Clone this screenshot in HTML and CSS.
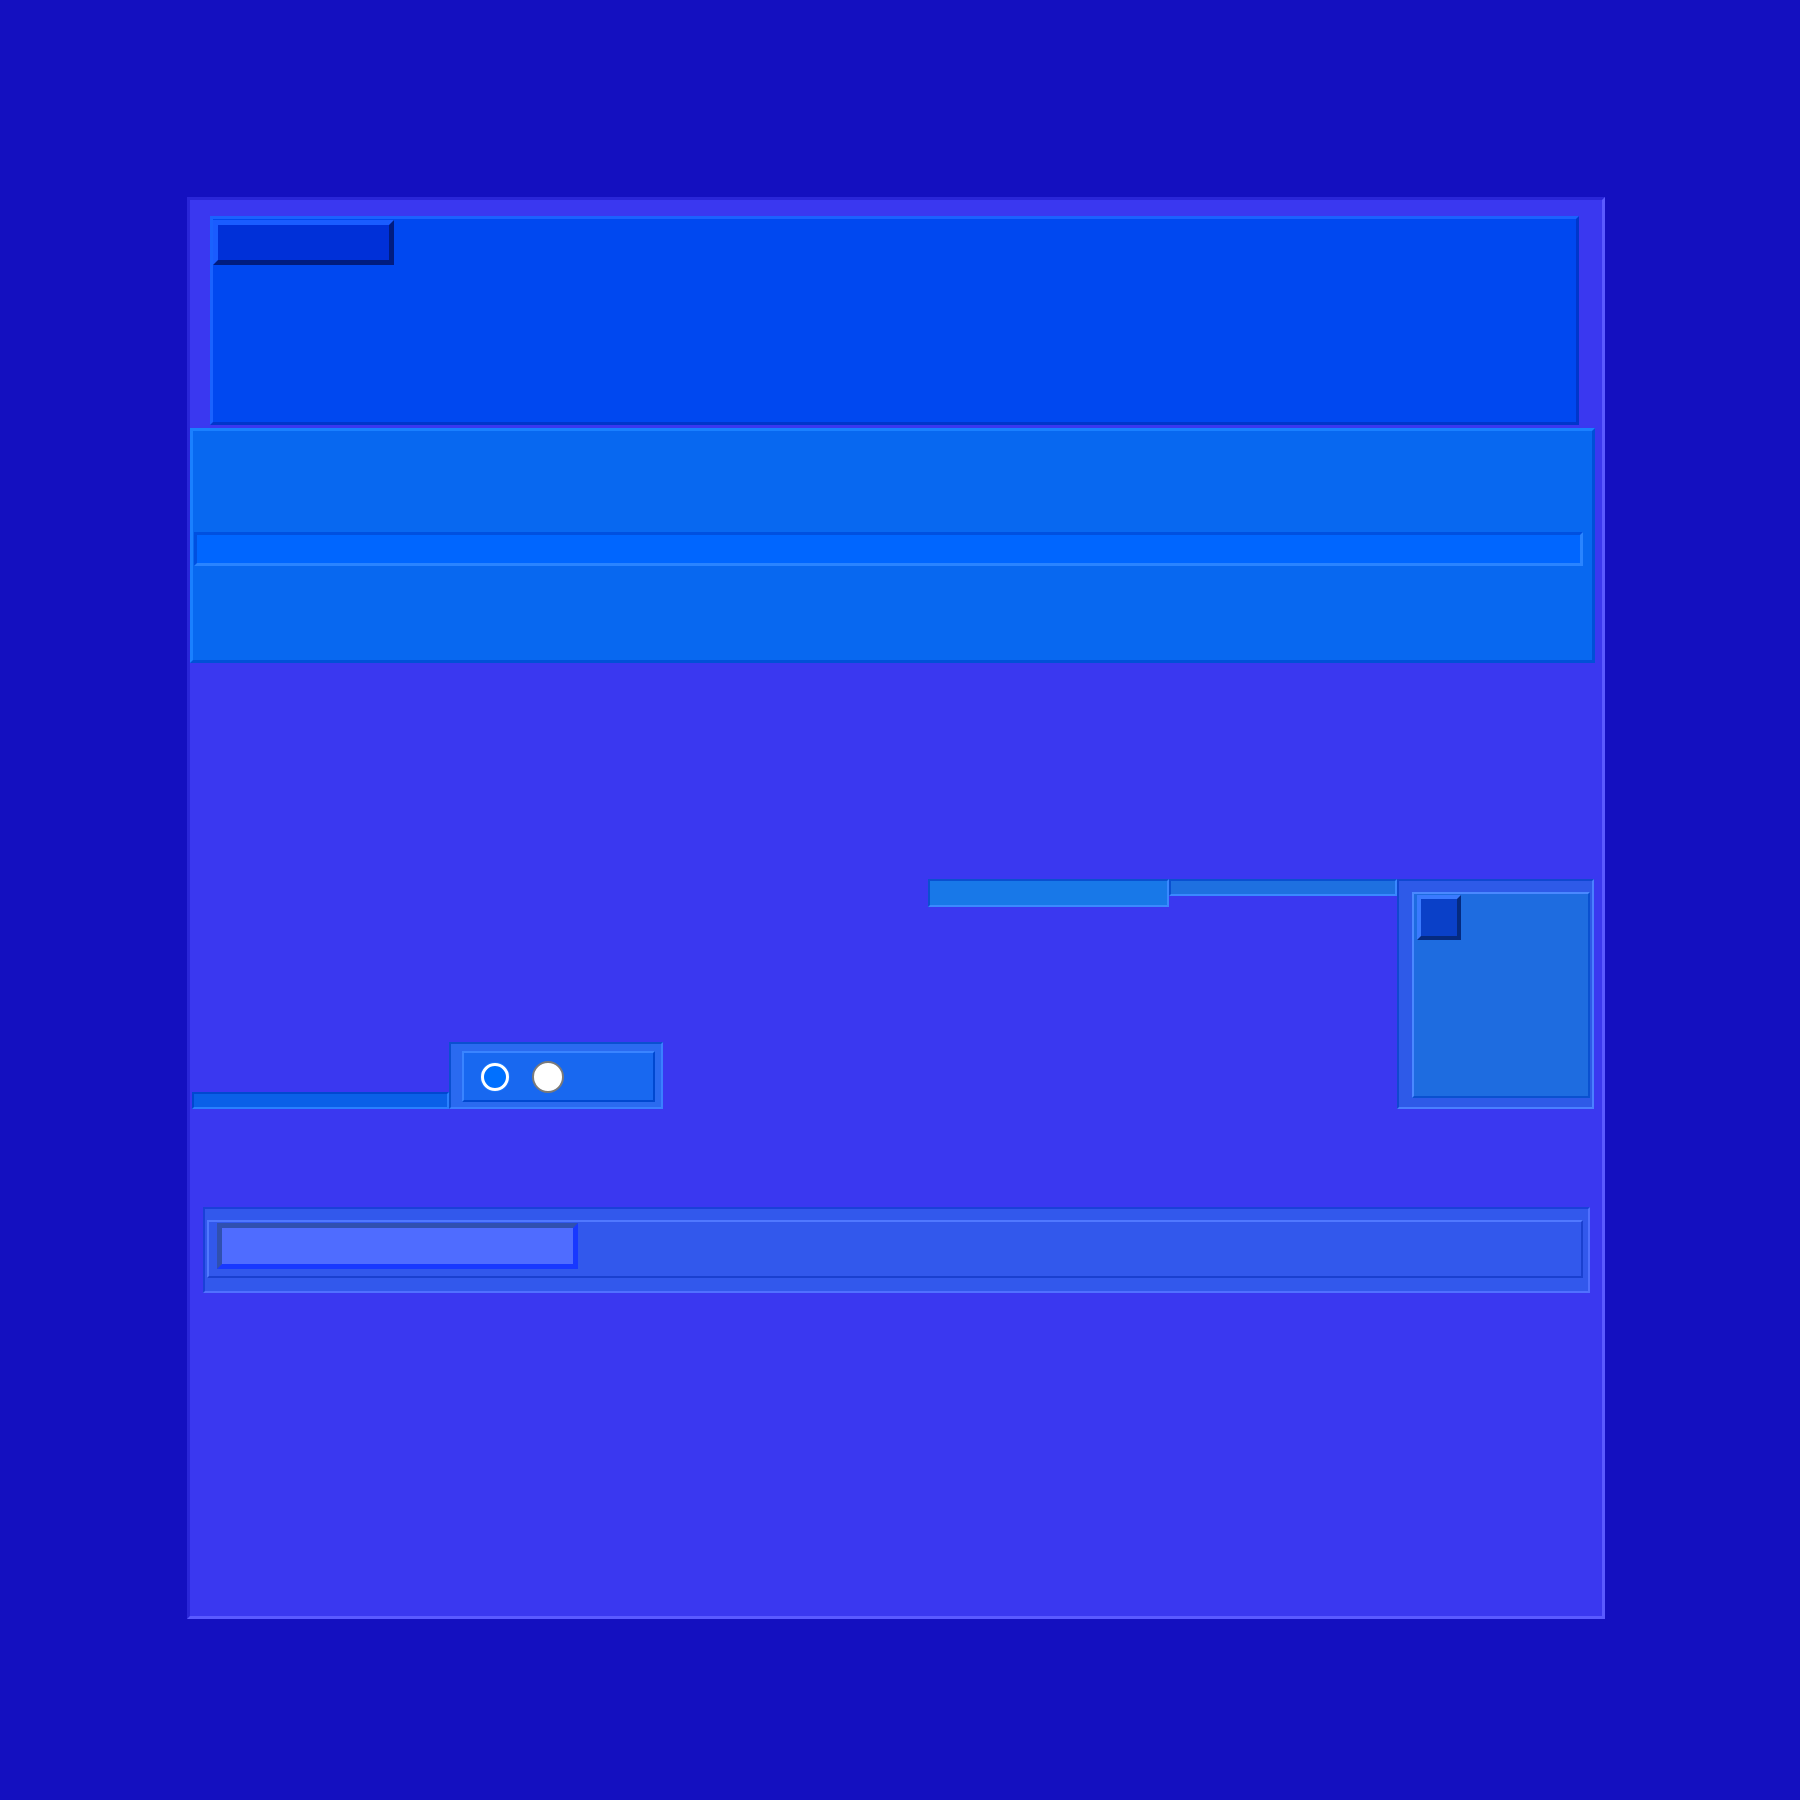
FILE: index.html
```html
<!DOCTYPE html>
<html lang="en">
<head>
<meta charset="utf-8">
<title>Panel</title>
<link rel="stylesheet" href="styles.css">
</head>
<body>
<div class="panel">
  <header class="header">
    <div class="header-btn"></div>
  </header>
  <section class="hero">
    <div class="hero-input"></div>
  </section>
  <div class="mid-row">
    <div class="left-group">
      <div class="thin-bar"></div>
      <div class="radio-box">
        <div class="radio-inner">
          <span class="radio radio-on"></span>
          <span class="radio radio-off"></span>
        </div>
      </div>
    </div>
    <div class="right-group">
      <div class="tab tab-a"></div>
      <div class="tab tab-b"></div>
      <div class="card">
        <div class="card-inner">
          <div class="card-btn"></div>
        </div>
      </div>
    </div>
  </div>
  <div class="progress">
    <div class="progress-inner">
      <div class="progress-fill" style="width:361px"></div>
    </div>
  </div>
</div>
</body>
</html>
```
FILE: styles.css
```css
* { box-sizing: border-box; }
html, body { margin: 0; padding: 0; }
body {
  background: #1410c0;
  width: 1800px;
  height: 1800px;
  font-family: "Liberation Sans", Arial, sans-serif;
  overflow: hidden;
}
.panel {
  margin: 197px 0 0 187px;
  width: 1418px;
  height: 1422px;
  background: #3a38f0;
  border: 3px solid;
  border-color: #2a26d8 #5a5aff #5a5aff #2a26d8;
  display: flex;
  flex-direction: column;
}
.header {
  margin: 16px 23px 0 20px;
  height: 209px;
  background: #0048f0;
  border: 3px solid;
  border-color: #1a62ff #0036cc #0036cc #1a62ff;
  padding: 1px 0 0 0;
}
.header-btn {
  width: 181px;
  height: 45px;
  background: #0030d8;
  border: 5px solid;
  border-color: #1a5cff #001c80 #001c80 #1a5cff;
}
.hero {
  margin: 3px 7px 0 0;
  height: 235px;
  background: #0868f0;
  border: 3px solid;
  border-color: #1a80ff #0050d8 #0050d8 #1a80ff;
  padding: 101px 0 0 1px;
}
.hero-input {
  width: 1389px;
  height: 34px;
  background: #0066ff;
  border: 3px solid;
  border-color: #0050e0 #2a84ff #2a84ff #0050e0;
}
.mid-row {
  margin-top: 216px;
  height: 230px;
  padding: 0 8px 0 2px;
  display: flex;
  justify-content: space-between;
  align-items: flex-end;
}
.left-group {
  display: flex;
  align-items: flex-end;
}
.thin-bar {
  width: 257px;
  height: 17px;
  background: #0a60e8;
  border: 2px solid;
  border-color: #0048d0 #2a80ff #2a80ff #0048d0;
}
.radio-box {
  width: 214px;
  height: 67px;
  background: #2a6af0;
  border: 2px solid;
  border-color: #0a50d0 #3a80ff #3a80ff #0a50d0;
  padding: 7px 6px 5px 11px;
}
.radio-inner {
  height: 51px;
  width: 193px;
  background: #1868f0;
  border: 2px solid;
  border-color: #3a84ff #0048d0 #0048d0 #3a84ff;
  display: flex;
  align-items: center;
  padding-left: 17px;
  gap: 23px;
}
.radio {
  display: block;
  border-radius: 50%;
}
.radio-on {
  width: 28px;
  height: 28px;
  background: #0070ff;
  border: 3px solid #ffffff;
  box-shadow: 0 0 0 1px #1a78ff;
}
.radio-off {
  width: 32px;
  height: 32px;
  background: #ffffff;
  border: 2px solid #7a7a7a;
}
.right-group {
  display: flex;
  align-items: flex-start;
  height: 230px;
}
.tab {
  border: 2px solid;
  border-color: #0a50d0 #3a88ff #3a88ff #0a50d0;
}
.tab-a {
  width: 241px;
  height: 28px;
  background: #1878e8;
}
.tab-b {
  width: 228px;
  height: 17px;
  background: #1e70e0;
}
.card {
  width: 197px;
  height: 230px;
  background: #2e5ae8;
  border: 2px solid;
  border-color: #1048d0 #4a80ff #4a80ff #1048d0;
  padding: 11px 2px 9px 13px;
}
.card-inner {
  width: 178px;
  height: 206px;
  background: #1e6ce0;
  border: 2px solid;
  border-color: #4a88ff #0a50d0 #0a50d0 #4a88ff;
  padding: 1px 0 0 3px;
}
.card-btn {
  width: 44px;
  height: 45px;
  background: #0a40c8;
  border: 4px solid;
  border-color: #3a7aff #052a80 #052a80 #3a7aff;
}
.progress {
  margin: 98px 12px 0 13px;
  height: 86px;
  background: #3258ec;
  border: 2px solid;
  border-color: #1a40d8 #5070ff #5070ff #1a40d8;
  padding: 11px 5px 13px 2px;
}
.progress-inner {
  height: 58px;
  background: #3258ec;
  border: 2px solid;
  border-color: #5078ff #1a40d0 #1a40d0 #5078ff;
  padding: 1px 0 0 8px;
}
.progress-fill {
  height: 46px;
  background: #4f6cff;
  border: 5px solid;
  border-color: #3050b0 #1838ff #1838ff #3050b0;
}
```
